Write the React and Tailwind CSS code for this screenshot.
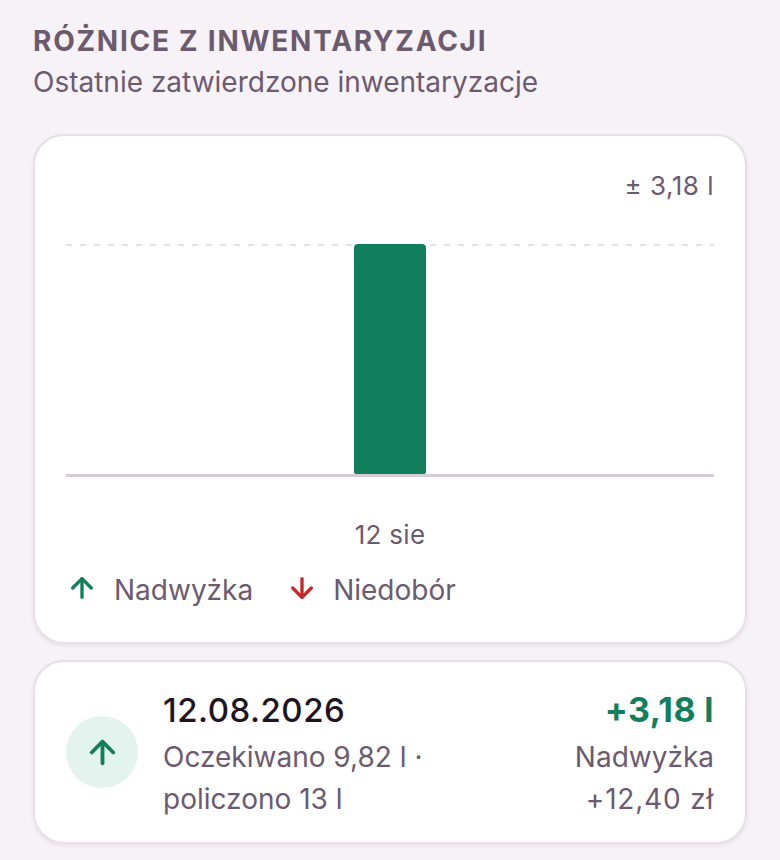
import React from "react";

const ArrowUp = ({ className }) => (
  <svg className={className} viewBox="0 0 24 24" fill="none" stroke="currentColor" strokeWidth="2.5" strokeLinecap="round" strokeLinejoin="round">
    <path d="M12 19V5" />
    <path d="M5 12l7-7 7 7" />
  </svg>
);

const ArrowDown = ({ className }) => (
  <svg className={className} viewBox="0 0 24 24" fill="none" stroke="currentColor" strokeWidth="2.5" strokeLinecap="round" strokeLinejoin="round">
    <path d="M12 5v14" />
    <path d="M5 12l7 7 7-7" />
  </svg>
);

const App = () => {
  return (
    <div className="min-h-[860px] bg-[#f7f2f7] px-[33px] pt-[24px] font-['Inter',sans-serif] text-[#6c5a6e]">
      <h2 className="text-[28px] font-bold leading-[34px] tracking-[1.75px]">RÓŻNICE Z INWENTARYZACJI</h2>
      <p className="mt-[7px] text-[28px] leading-[34px]">Ostatnie zatwierdzone inwentaryzacje</p>

      <div className="mt-[35px] h-[510px] rounded-[31px] border-2 border-[#e7dee8] bg-white px-[31px] pt-[36px] shadow-[0_2px_4px_rgba(60,40,60,0.08)]">
        <div className="text-right text-[26px] leading-[28px] tracking-[0.5px]">± 3,18 l</div>
        <div className="relative mt-[44px] flex h-[233px] justify-center border-b-[3px] border-[#d6cbd8]">
          <svg className="absolute left-0 top-0 h-[2px] w-full">
            <line x1="0" y1="1" x2="100%" y2="1" stroke="#e7dee8" strokeWidth="2" strokeDasharray="6 8" />
          </svg>
          <div className="relative h-full w-[72px] rounded-t-[4px] rounded-b-[2px] bg-[#127f5c]" />
        </div>
        <div className="mt-[44px] text-center text-[26px] leading-[28px] tracking-[0.3px]">12 sie</div>
        <div className="mt-[23px] flex items-center text-[28px] leading-[34px]">
          <ArrowUp className="mb-[4px] h-[32px] w-[32px] text-[#127f5c]" />
          <span className="ml-[16px]">Nadwyżka</span>
          <ArrowDown className="mb-[4px] ml-[33px] h-[32px] w-[32px] text-[#c62828]" />
          <span className="ml-[15px]">Niedobór</span>
        </div>
      </div>

      <div className="mt-[16px] flex h-[184px] items-center rounded-[31px] border-2 border-[#e7dee8] bg-white px-[31px] shadow-[0_2px_4px_rgba(60,40,60,0.08)]">
        <div className="flex h-[72px] w-[72px] shrink-0 items-center justify-center rounded-full bg-[#e3f3ed]">
          <ArrowUp className="h-[37px] w-[37px] text-[#127f5c]" />
        </div>
        <div className="ml-[25px] flex-1 pt-[6px]">
          <div className="text-[33px] font-medium leading-[40px] tracking-[0.5px] text-[#1e1520]">12.08.2026</div>
          <div className="mt-[6px] w-[290px] text-[28px] leading-[42px]">Oczekiwano 9,82 l · policzono 13 l</div>
        </div>
        <div className="pt-[6px] text-right">
          <div className="text-[34px] font-bold leading-[40px] tracking-[0.4px] text-[#127f5c]">+3,18 l</div>
          <div className="mt-[6px] text-[28px] leading-[42px]">Nadwyżka</div>
          <div className="text-[28px] leading-[42px] tracking-[0.8px]">+12,40 zł</div>
        </div>
      </div>
    </div>
  );
};

export default App;
